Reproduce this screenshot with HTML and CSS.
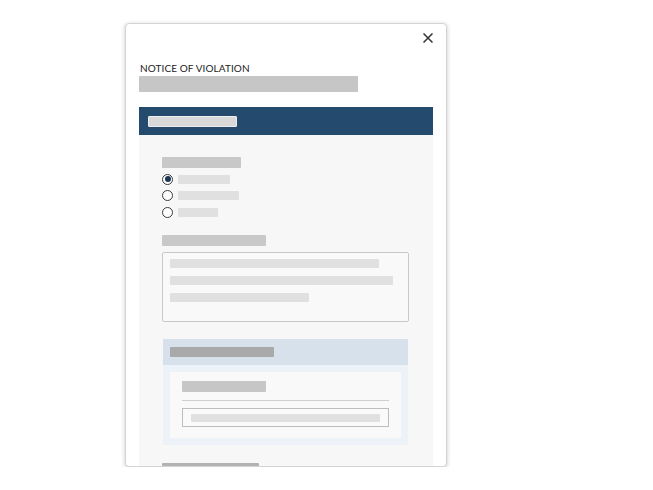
FILE: index.html
```html
<!DOCTYPE html>
<html lang="en">
<head>
    <meta charset="UTF-8">
    <meta name="viewport" content="width=device-width, initial-scale=1.0">
    <title>Notice of Violation</title>
    <link rel="stylesheet" href="styles.css">
</head>
<body>
    <!-- Modal -->
    <div class="modal">
        <div class="modal-top">
            <button class="close-btn" aria-label="Close">
                <svg width="10" height="10" viewBox="0 0 10 10">
                    <path d="M0.5 0.5 L9.5 9.5 M9.5 0.5 L0.5 9.5" stroke="#333" stroke-width="1.5" fill="none"/>
                </svg>
            </button>
        </div>
        <div class="modal-title">NOTICE OF VIOLATION</div>
        <div class="ph ph-subtitle"></div>

        <div class="panel">
            <div class="panel-header">
                <div class="ph ph-header"></div>
            </div>
            <div class="panel-body">
                <div class="ph ph-label" style="width: 79px;"></div>
                <ul class="radios">
                    <li><span class="radio checked"></span><span class="ph ph-option" style="width: 52px;"></span></li>
                    <li><span class="radio"></span><span class="ph ph-option" style="width: 61px;"></span></li>
                    <li><span class="radio"></span><span class="ph ph-option" style="width: 40px;"></span></li>
                </ul>

                <div class="ph ph-label field-label" style="width: 104px;"></div>
                <div class="textarea">
                    <div class="ph ph-line" style="width: 209px;"></div>
                    <div class="ph ph-line" style="width: 223px;"></div>
                    <div class="ph ph-line" style="width: 139px;"></div>
                </div>

                <div class="section">
                    <div class="section-header">
                        <div class="ph ph-section"></div>
                    </div>
                    <div class="section-body">
                        <div class="section-card">
                            <div class="ph ph-card-label"></div>
                            <div class="divider"></div>
                            <div class="input">
                                <div class="ph ph-input"></div>
                            </div>
                        </div>
                    </div>
                </div>

                <div class="ph ph-bottom"></div>
            </div>
        </div>
    </div>
</body>
</html>
```

FILE: styles.css
```css
body {
    margin: 0;
    background-color: #fff;
    font-family: Lato, "Open Sans", sans-serif;
}

.modal {
    box-sizing: border-box;
    width: 322px;
    height: 444px;
    margin: 23px 0 0 125px;
    padding: 0 13px;
    background-color: #fff;
    border: 1px solid #d4d4d4;
    border-radius: 4px;
    box-shadow: 0 1px 4px rgba(0,0,0,0.22);
    overflow: hidden;
}

.modal-top {
    display: flex;
    justify-content: flex-end;
    padding-top: 9px;
}

.close-btn {
    display: block;
    width: 10px;
    height: 10px;
    padding: 0;
    border: none;
    background: none;
    cursor: pointer;
}

.close-btn svg {
    display: block;
}

.modal-title {
    margin-top: 19px;
    padding-left: 1px;
    font-size: 10px;
    line-height: 12px;
    letter-spacing: 0.1px;
    color: #222;
}

/* placeholder bars */
.ph {
    display: block;
    background-color: #e0e0e0;
    border-radius: 1px;
}

.ph-subtitle {
    width: 219px;
    height: 16px;
    margin-top: 2px;
    background-color: #c6c6c6;
}

.panel {
    margin-top: 15px;
}

.panel-header {
    height: 28px;
    padding: 9px 0 0 9px;
    box-sizing: border-box;
    background-color: #244a6e;
}

.ph-header {
    box-sizing: border-box;
    width: 89px;
    height: 11px;
    background-color: #d9d9d9;
    border: 1px solid #eee;
}

.panel-body {
    padding: 22px 24px 0 23px;
    height: 340px;
    background-color: #f7f7f8;
}

.ph-label {
    height: 11px;
    background-color: #c8c8c8;
}

.radios {
    list-style: none;
    margin: 3px 0 0 0;
    padding: 0;
}

.radios li {
    display: flex;
    align-items: center;
    height: 16.5px;
}

.radio {
    box-sizing: border-box;
    width: 11px;
    height: 11px;
    border: 1px solid #3a3a3a;
    border-radius: 50%;
    background-color: #fff;
    display: flex;
    align-items: center;
    justify-content: center;
}

.radio.checked::after {
    content: "";
    width: 6px;
    height: 6px;
    border-radius: 50%;
    background-color: #1d3550;
}

.ph-option {
    height: 9px;
    margin-left: 5px;
}

.field-label {
    margin-top: 14px;
}

.textarea {
    box-sizing: border-box;
    height: 70px;
    margin-top: 6px;
    padding: 6px 7px;
    background-color: #f9f9f9;
    border: 1px solid #c8c8c8;
    border-radius: 2px;
}

.ph-line {
    height: 9px;
    margin-bottom: 8px;
}

.section {
    margin: 17px 1px 0 1px;
}

.section-header {
    box-sizing: border-box;
    height: 26px;
    padding: 8px 7px;
    background-color: #d7e1ec;
}

.ph-section {
    width: 104px;
    height: 10px;
    background-color: #a9a9a9;
}

.section-body {
    padding: 7px;
    background-color: #edf2f8;
}

.section-card {
    padding: 9px 12px 11px 12px;
    background-color: #f9f9fa;
}

.ph-card-label {
    width: 84px;
    height: 11px;
    background-color: #c6c6c6;
}

.divider {
    height: 1px;
    margin-top: 8px;
    background-color: #cfcfcf;
}

.input {
    box-sizing: border-box;
    height: 19px;
    margin-top: 7px;
    padding: 5px 8px;
    background-color: #fafafa;
    border: 1px solid #bdbdbd;
}

.ph-input {
    height: 8px;
}

.ph-bottom {
    width: 97px;
    height: 8px;
    margin-top: 18px;
    background-color: #b3b3b3;
}
```
